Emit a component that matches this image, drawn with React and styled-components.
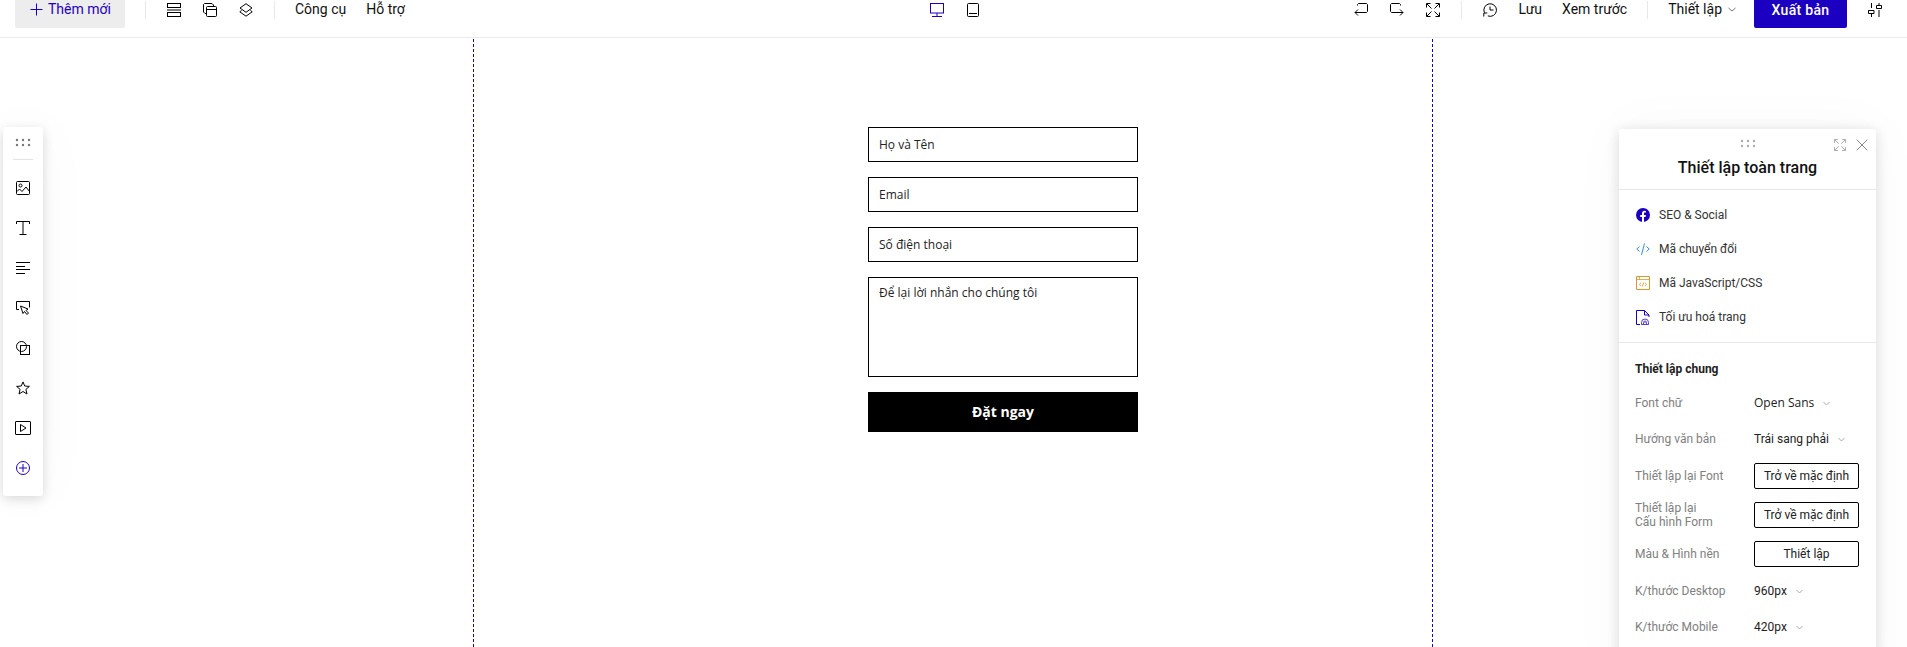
import React from "react";
import styled, { createGlobalStyle } from "styled-components";

const Global = createGlobalStyle`
  * { box-sizing: border-box; }
  body { margin: 0; background: #fff; font-family: Roboto, "Liberation Sans", sans-serif; overflow: hidden; }
  svg { display: block; flex: none; }
`;
const BLUE = "#1c00c2";

const Page = styled.div`
  width: 100%;
  height: 647px;
  overflow: hidden;
  position: relative;
`;
const Header = styled.header`
  display: flex;
  align-items: center;
  height: 56px;
  margin-top: -18px;
  border-bottom: 1px solid #ebebeb;
  padding: 0 25px 0 15px;
  font-size: 14px;
  line-height: 18px;
  color: #111;
`;
const Group = styled.div`
  display: flex;
  align-items: center;
  flex: ${(p) => (p.$grow ? "1 1 0" : "none")};
  justify-content: ${(p) => p.$justify || "flex-start"};
`;
const AddButton = styled.button`
  display: flex;
  align-items: center;
  gap: 5px;
  width: 110px;
  height: 37px;
  padding: 0 0 1px 15px;
  border: 0;
  border-radius: 2px;
  background: #ededed;
  color: ${BLUE};
  font: 14px/18px Roboto, sans-serif;
`;
const Rule = styled.span`
  width: 1px;
  height: 18px;
  background: #e8e8e8;
  margin: 1px ${(p) => p.$right}px 0 ${(p) => p.$left}px;
`;
const IconRow = styled.div`
  display: flex;
  align-items: center;
  gap: ${(p) => p.$gap}px;
  padding-top: 1px;
  margin-left: ${(p) => p.$left || 0}px;
`;
const NavText = styled.span`
  margin-left: ${(p) => p.$left || 0}px;
  padding-bottom: 1px;
  white-space: nowrap;
  display: flex;
  align-items: center;
  gap: 6px;
`;
const Publish = styled.button`
  width: 93px;
  height: 37px;
  margin: 0 21px 0 18px;
  padding: 0;
  border: 0;
  border-radius: 2px;
  background: ${BLUE};
  color: #fff;
  font: 500 14px/18px Roboto, sans-serif;
  letter-spacing: 0.3px;
`;
const Canvas = styled.main`
  width: 960px;
  height: 609px;
  margin-left: 473px;
  padding: 89px 0 0 395px;
  background:
    repeating-linear-gradient(${BLUE} 0 3px, transparent 3px 5px) 0 1px / 1px 100% no-repeat,
    repeating-linear-gradient(${BLUE} 0 3px, transparent 3px 5px) 100% 1px / 1px 100% no-repeat;
`;
const Form = styled.form`
  display: flex;
  flex-direction: column;
  gap: 15px;
  width: 270px;
`;
const Field = styled.div`
  height: ${(p) => p.$h || 35}px;
  padding: ${(p) => (p.$h ? "7px" : "9px")} 11px 0 10px;
  border: 1px solid #000;
  color: #222;
  font: 12px/16px "Open Sans", sans-serif;
`;
const Submit = styled.button`
  height: 40px;
  border: 0;
  padding: 0;
  background: #000;
  color: #fff;
  font: 700 14px/22px "Open Sans", sans-serif;
`;
const Tools = styled.aside`
  position: absolute;
  left: 3px;
  top: 127px;
  width: 40px;
  height: 369px;
  padding-top: 11px;
  border-radius: 3px;
  background: #fff;
  box-shadow: 0 3px 12px rgba(0, 0, 0, 0.15), 0 0 60px rgba(0, 0, 0, 0.03);
  display: flex;
  flex-direction: column;
  align-items: center;
`;
const ToolRule = styled.div`
  width: 20px;
  height: 1px;
  margin: 12px 0 8px;
  background: #e4e4e4;
`;
const Tool = styled.div`
  height: 40px;
  display: grid;
  place-items: center;
`;
const Panel = styled.aside`
  position: absolute;
  left: 1619px;
  top: 129px;
  width: 257px;
  height: 560px;
  border-radius: 3px 3px 0 0;
  background: #fff;
  box-shadow: 0 2px 14px rgba(0, 0, 0, 0.14), 0 0 60px rgba(0, 0, 0, 0.03);
`;
const PanelHead = styled.div`
  height: 61px;
  padding-top: 10px;
  border-bottom: 1px solid #e8e8e8;
`;
const HeadBar = styled.div`
  display: grid;
  grid-template-columns: 1fr 16px 1fr;
  height: 15px;
`;
const HeadActions = styled.div`
  display: flex;
  justify-content: flex-end;
  gap: 10px;
  padding-right: 8px;
`;
const Title = styled.h2`
  margin: 4px 0 0;
  text-align: center;
  font-size: 16px;
  line-height: 20px;
  font-weight: 500;
  color: #111;
`;
const Links = styled.div`
  height: 153px;
  padding: 8px 17px;
  border-bottom: 1px solid #e8e8e8;
`;
const LinkRow = styled.div`
  display: flex;
  align-items: center;
  gap: 9px;
  height: 34px;
  font-size: 12px;
  line-height: 16px;
  color: #333;
`;
const Settings = styled.section`
  padding: 18px 16px 0;
  font-size: 12px;
  line-height: 14px;
`;
const Subhead = styled.h3`
  margin: 0 0 8px;
  font-size: 12px;
  line-height: 16px;
  font-weight: 700;
  color: #222;
`;
const Setting = styled.div`
  display: grid;
  grid-template-columns: 119px 105px;
  align-items: center;
  height: ${(p) => p.$h}px;
  color: #808080;
`;
const Value = styled.span`
  display: flex;
  align-items: center;
  gap: 9px;
  color: #222;
  font-family: ${(p) => (p.$open ? '"Open Sans"' : "Roboto")}, sans-serif;
`;
const Outline = styled.button`
  width: 105px;
  height: 26px;
  padding: 0;
  border: 1px solid #000;
  border-radius: 2px;
  background: #fff;
  color: #222;
  font: 12px/16px Roboto, sans-serif;
`;

const Svg = ({ s = 14, w = s, h = s, c = "#000", sw = 1, children }) => (
  <svg width={w} height={h} viewBox={`0 0 ${w} ${h}`} fill="none" stroke={c} strokeWidth={sw}>
    {children}
  </svg>
);
const Dots = ({ c = "#777", g = 6 }) => (
  <svg width="16" height="9" viewBox="0 0 16 9" fill={c}>
    {[0, 1, 2].map((i) => [0, 1].map((j) => <circle key={`${i}${j}`} cx={8 + (i - 1) * g} cy={2 + j * 5} r="1.2" />))}
  </svg>
);
const Chevron = ({ s = 7, c = "#aaa" }) => (
  <Svg w={s} h={5} c={c}><path d={`M.5 1 L${s / 2} 4 L${s - 0.5} 1`} /></Svg>
);
const Expand = ({ s = 14, c = "#000" }) => (
  <svg width={s} height={s} viewBox="0 0 14 14" fill="none" stroke={c}>
    <path d="M4.500.5h-4v4M9.500.5h4v4M4.500 13.500h-4v-4M9.500 13.500h4v-4M1 1l4.500 4.500M13 1 8.500 5.500M1 13l4.500-4.500M13 13 8.500 8.500" />
  </svg>
);

const tools = [
  <Svg key="image"><rect x=".5" y=".5" width="13" height="13" rx="1" /><circle cx="4.500" cy="4.500" r="1.500" /><path d="M1 10.500 3.500 8l2.500 2.500 4-4.500 3.500 4.500" /></Svg>,
  <Svg key="text"><path d="M.5 3V.5h13V3M3.500 13.500h7" /><path d="M7 1v12" /></Svg>,
  <Svg key="para"><path d="M0 1.500h14M0 5.500h9M0 8.500h14M0 12.500h9" /></Svg>,
  <Svg key="button"><path d="M3 8.500H.5v-8h13v6" /><path d="M4.500 5 7 12.500l1.500-2 2.500 3 1.500-1.500-2.500-2.500 2-1.500z" /></Svg>,
  <Svg key="shape"><circle cx="5.500" cy="5.500" r="5" /><rect x="4.500" y="4.500" width="9" height="9" /></Svg>,
  <Svg key="star"><path d="m7 .9 1.700 4.100 4.700.4-3.500 3 1.100 4.600L7 10.500 3 13l1.100-4.600-3.500-3L5.300 5z" /></Svg>,
  <Svg key="video" w={16} h={14}><rect x=".5" y=".5" width="15" height="13" rx=".5" /><path d="M5.500 3.500v7l5.500-3.500z" /></Svg>,
  <Svg key="add" c={BLUE}><circle cx="7" cy="7" r="6.500" /><path d="M3 7h8M7 3v8" /></Svg>,
];

const links = [
  ["SEO & Social", <svg key="f" width="14" height="14" viewBox="0 0 14 14"><circle cx="7" cy="7" r="7" fill={BLUE} /><path d="M6 14V9.100H4.200V7H6V5.400C6 3.700 7 2.800 8.500 2.800l1.400.1v1.700H9c-.8 0-1 .5-1 1V7h1.900l-.3 2.100H8V14z" fill="#fff" /></svg>],
  ["Mã chuyển đổi", <Svg key="c" c="#2f8de4"><path d="M3.500 4.500.8 7l2.700 2.500M10.500 4.500 13.200 7l-2.700 2.500M8.500 1.500l-3 11.500" /></Svg>],
  ["Mã JavaScript/CSS", <Svg key="j" c="#e0962f"><path d="M.5.5h13v13H.5z" /><path d="M1 3.500h12M3.500 1v2" strokeOpacity=".8" /><path d="M5 6.800 3.500 8.500 5 10.200M9 6.800l1.500 1.700L9 10.200M7.600 6.500l-1.200 4" strokeWidth=".9" /></Svg>],
  ["Tối ưu hoá trang", <Svg key="p" w={14} h={15} c={BLUE}><path d="M4 14.500H.5V.5h8l4.500 4.500v2M8.500.5V5H13" /><path d="M5.500 14.500v-2a3.500 3.500 0 0 1 7 0v2zM7.500 14v-1.500a1.500 1.500 0 0 1 3 0V14M9 12v1" strokeOpacity=".75" /></Svg>],
];

const settings = [
  ["Font chữ", 36, <Value key="v" $open>Open Sans <Chevron /></Value>],
  ["Hướng văn bản", 36, <Value key="v">Trái sang phải <Chevron /></Value>],
  ["Thiết lập lại Font", 38, <Outline key="v">Trở về mặc định</Outline>],
  [<>Thiết lập lại<br />Cấu hình Form</>, 40, <Outline key="v">Trở về mặc định</Outline>],
  ["Màu & Hình nền", 38, <Outline key="v">Thiết lập</Outline>],
  ["K/thước Desktop", 36, <Value key="v">960px <Chevron /></Value>],
  ["K/thước Mobile", 36, <Value key="v">420px <Chevron /></Value>],
];

export default function App() {
  return (
    <>
      <Global />
      <Page>
        <Header>
          <Group $grow>
            <AddButton><Svg s={13} c={BLUE}><path d="M6.500.5v12M.5 6.500h12" /></Svg>Thêm mới</AddButton>
            <Rule $left={20} $right={21} />
            <IconRow $gap={22}>
              <Svg><rect x=".5" y=".5" width="13" height="4" /><path d="M0 7h14" /><rect x=".5" y="9.500" width="13" height="4" /></Svg>
              <Svg><rect x="3.500" y="3.500" width="10" height="10" rx="1" /><path d="M3.500 10.500H2L.5 9V1.500l1-1H9l1.500 1.500v1.500M3.500 6.500h10" /></Svg>
              <Svg><path d="M7 .7 13 5 7 9.300 1 5zM2.500 7.500.8 8.800 7 13.200l6.200-4.400-1.700-1.300" /></Svg>
            </IconRow>
            <Rule $left={21} $right={20} />
            <NavText>Công cụ</NavText>
            <NavText $left={20}>Hỗ trợ</NavText>
          </Group>
          <IconRow $gap={23} $left={12}>
            <Svg c={BLUE}><rect x=".5" y=".5" width="13" height="9.500" /><path d="M7 10v3M2 13.500h10" /></Svg>
            <Svg w={12} h={14}><rect x=".5" y=".5" width="11" height="13" rx="1" /><path d="M2 10.500h8" /></Svg>
          </IconRow>
          <Group $grow $justify="flex-end">
            <IconRow $gap={22}>
              <Svg><path d="M3.500 2.500v-1l1-1h8l1 1v7l-1 1H1M4 6.500l-3 3 3 3" /></Svg>
              <Svg><path d="M10.500 2.500v-1l-1-1h-8l-1 1v7l1 1H13M10 6.500l3 3-3 3" /></Svg>
              <Expand />
            </IconRow>
            <Rule $left={21} $right={21} />
            <IconRow><Svg><path d="M1.500 9.800A6.300 6.300 0 1 1 4.800 12.900M.8 13.500V10h3.500M7 3.500V7h3.500" /></Svg></IconRow>
            <NavText $left={21}>Lưu</NavText>
            <NavText $left={20}>Xem trước</NavText>
            <Rule $left={20} $right={20} />
            <NavText>Thiết lập <Chevron s={8} c="#777" /></NavText>
            <Publish>Xuất bản</Publish>
            <IconRow><Svg><path d="M3.500 0v5M.5 7.500h5.500v3H.5zM3.500 11v3M11 7v7M11 0v2M8.500 2.500h5v3h-5z" /></Svg></IconRow>
          </Group>
        </Header>
        <Canvas>
          <Form>
            <Field>Họ và Tên</Field>
            <Field>Email</Field>
            <Field>Số điện thoại</Field>
            <Field $h={100}>Để lại lời nhắn cho chúng tôi</Field>
            <Submit type="button">Đặt ngay</Submit>
          </Form>
        </Canvas>
        <Tools>
          <Dots c="#777" />
          <ToolRule />
          {tools.map((t) => <Tool key={t.key}>{t}</Tool>)}
        </Tools>
        <Panel>
          <PanelHead>
            <HeadBar>
              <span />
              <Dots c="#aaa" />
              <HeadActions>
                <Expand s={12} c="#999" />
                <Svg s={12} c="#888"><path d="m.7.7 10.600 10.600M11.300.7.7 11.300" /></Svg>
              </HeadActions>
            </HeadBar>
            <Title>Thiết lập toàn trang</Title>
          </PanelHead>
          <Links>
            {links.map(([t, icon]) => <LinkRow key={t}>{icon}{t}</LinkRow>)}
          </Links>
          <Settings>
            <Subhead>Thiết lập chung</Subhead>
            {settings.map(([t, h, v], i) => <Setting key={i} $h={h}><span>{t}</span>{v}</Setting>)}
          </Settings>
        </Panel>
      </Page>
    </>
  );
}
